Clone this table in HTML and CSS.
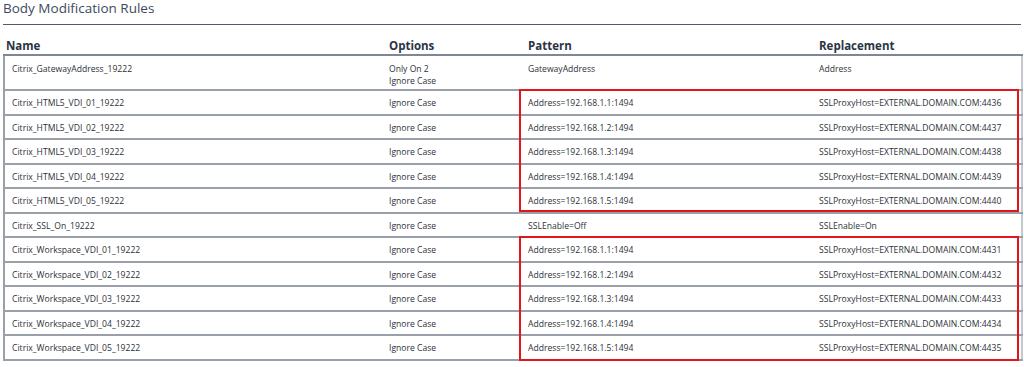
FILE: index.html
```html
<!DOCTYPE html>
<html lang="en">
<head>
    <meta charset="UTF-8">
    <meta name="viewport" content="width=device-width, initial-scale=1.0">
    <title>Body Modification Rules</title>
    <link rel="stylesheet" href="styles.css">
</head>
<body>
    <section class="panel">
        <h2 class="panel-title">Body Modification Rules</h2>

        <div class="rules-wrap">
            <table class="rules">
                <colgroup>
                    <col class="col-name">
                    <col class="col-options">
                    <col class="col-pattern">
                    <col class="col-replacement">
                </colgroup>
                <thead>
                    <tr>
                        <th class="name">Name</th>
                        <th>Options</th>
                        <th>Pattern</th>
                        <th>Replacement</th>
                    </tr>
                </thead>
                <tbody>
                    <tr class="tall">
                        <td class="name">Citrix_GatewayAddress_19222</td>
                        <td>Only On 2<br>Ignore Case</td>
                        <td>GatewayAddress</td>
                        <td>Address</td>
                    </tr>
                    <tr>
                        <td class="name">Citrix_HTML5_VDI_01_19222</td>
                        <td>Ignore Case</td>
                        <td>Address=192.168.1.1:1494</td>
                        <td>SSLProxyHost=EXTERNAL.DOMAIN.COM:4436</td>
                    </tr>
                    <tr>
                        <td class="name">Citrix_HTML5_VDI_02_19222</td>
                        <td>Ignore Case</td>
                        <td>Address=192.168.1.2:1494</td>
                        <td>SSLProxyHost=EXTERNAL.DOMAIN.COM:4437</td>
                    </tr>
                    <tr>
                        <td class="name">Citrix_HTML5_VDI_03_19222</td>
                        <td>Ignore Case</td>
                        <td>Address=192.168.1.3:1494</td>
                        <td>SSLProxyHost=EXTERNAL.DOMAIN.COM:4438</td>
                    </tr>
                    <tr>
                        <td class="name">Citrix_HTML5_VDI_04_19222</td>
                        <td>Ignore Case</td>
                        <td>Address=192.168.1.4:1494</td>
                        <td>SSLProxyHost=EXTERNAL.DOMAIN.COM:4439</td>
                    </tr>
                    <tr>
                        <td class="name">Citrix_HTML5_VDI_05_19222</td>
                        <td>Ignore Case</td>
                        <td>Address=192.168.1.5:1494</td>
                        <td>SSLProxyHost=EXTERNAL.DOMAIN.COM:4440</td>
                    </tr>
                    <tr>
                        <td class="name">Citrix_SSL_On_19222</td>
                        <td>Ignore Case</td>
                        <td>SSLEnable=Off</td>
                        <td>SSLEnable=On</td>
                    </tr>
                    <tr>
                        <td class="name">Citrix_Workspace_VDI_01_19222</td>
                        <td>Ignore Case</td>
                        <td>Address=192.168.1.1:1494</td>
                        <td>SSLProxyHost=EXTERNAL.DOMAIN.COM:4431</td>
                    </tr>
                    <tr>
                        <td class="name">Citrix_Workspace_VDI_02_19222</td>
                        <td>Ignore Case</td>
                        <td>Address=192.168.1.2:1494</td>
                        <td>SSLProxyHost=EXTERNAL.DOMAIN.COM:4432</td>
                    </tr>
                    <tr>
                        <td class="name">Citrix_Workspace_VDI_03_19222</td>
                        <td>Ignore Case</td>
                        <td>Address=192.168.1.3:1494</td>
                        <td>SSLProxyHost=EXTERNAL.DOMAIN.COM:4433</td>
                    </tr>
                    <tr>
                        <td class="name">Citrix_Workspace_VDI_04_19222</td>
                        <td>Ignore Case</td>
                        <td>Address=192.168.1.4:1494</td>
                        <td>SSLProxyHost=EXTERNAL.DOMAIN.COM:4434</td>
                    </tr>
                    <tr>
                        <td class="name">Citrix_Workspace_VDI_05_19222</td>
                        <td>Ignore Case</td>
                        <td>Address=192.168.1.5:1494</td>
                        <td>SSLProxyHost=EXTERNAL.DOMAIN.COM:4435</td>
                    </tr>
                </tbody>
            </table>

            <!-- annotation boxes drawn over the screenshot -->
            <div class="mark mark-html5"></div>
            <div class="mark mark-workspace"></div>
        </div>
    </section>
</body>
</html>
```

FILE: styles.css
```css
* {
    box-sizing: border-box;
    margin: 0;
    padding: 0;
}

body {
    font-family: 'Open Sans', 'Noto Sans', sans-serif;
    background: #fff;
    color: #2f343c;
    overflow: hidden;
}

.panel {
    padding: 0 3px;
}

.panel-title {
    font-size: 13.5px;
    font-weight: normal;
    color: #3d4a5c;
    line-height: 18px;
    padding-bottom: 7px;
    border-bottom: 1px solid #4f5a6b;
    margin-top: -1px;
}

.rules-wrap {
    position: relative;
    width: 1018px;
    margin-top: 14px;
}

.rules {
    width: 100%;
    border-collapse: collapse;
    table-layout: fixed;
}

.col-name { width: 381px; }
.col-options { width: 139px; }
.col-pattern { width: 291px; }
.col-replacement { width: 207px; }

.rules th {
    text-align: left;
    font-size: 11.5px;
    font-weight: bold;
    color: #2b3445;
    line-height: 14px;
    padding: 0 4px 1px;
    border-bottom: 2px solid #7f8796;
}

.rules th.name {
    padding-left: 2px;
}

.rules td {
    font-size: 8.6px;
    color: #2c3139;
    line-height: 12px;
    padding: 6px 4px 0;
    vertical-align: top;
    height: 24.5px;
    border-bottom: 2px solid #9aa0aa;
}

.rules td.name {
    padding-left: 7px;
    border-left: 2px solid #9aa0aa;
}

.rules td:last-child {
    border-right: 2px solid #c4c8cf;
}

.rules tr.tall td {
    height: 35px;
    padding-top: 7px;
}

.mark {
    position: absolute;
    border: 2px solid #e0161b;
    left: 516px;
    width: 500px;
}

.mark-html5 {
    top: 50px;
    height: 123px;
}

.mark-workspace {
    top: 197px;
    height: 125px;
}
```
